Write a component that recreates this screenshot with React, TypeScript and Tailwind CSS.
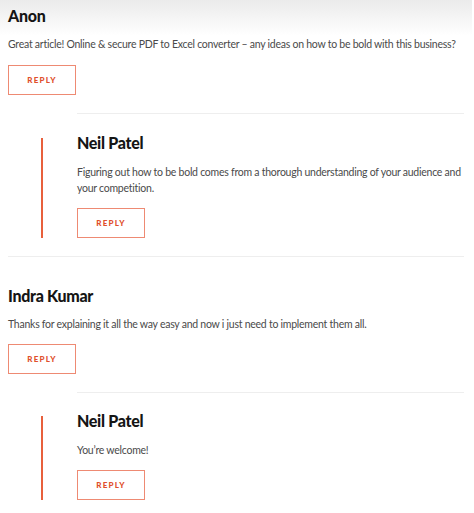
import React from "react";

function ReplyButton() {
  return (
    <button className="flex h-[30px] w-[68px] items-center justify-center border border-[#ee8a73] bg-white font-['Lato',sans-serif] text-[8px] font-black tracking-[1.2px] text-[#e0502c]">
      REPLY
    </button>
  );
}

function Heading({ children }: { children: React.ReactNode }) {
  return (
    <h3 className="h-[20px] font-['Lato',sans-serif] text-[16px] font-black leading-[20px] tracking-[-0.3px] text-[#151515]">
      {children}
    </h3>
  );
}

function Body({ children, mt }: { children: React.ReactNode; mt: string }) {
  return (
    <p className={`${mt} font-['Lato',sans-serif] text-[10.5px] leading-[16px] tracking-[-0.25px] text-[#4a4a4a]`}>
      {children}
    </p>
  );
}

export default function App() {
  return (
    <div className="h-[513px] w-[474px] overflow-hidden bg-white">
      <div className="w-[472px] bg-[linear-gradient(to_bottom,#ebebeb_0px,#ffffff_36px)] px-2 pt-[6px]">
        {/* Anon */}
        <Heading>Anon</Heading>
        <Body mt="mt-[10px]">
          Great article! Online &amp; secure PDF to Excel converter – any ideas on how to be bold with this business?
        </Body>
        <div className="mt-[13px]">
          <ReplyButton />
        </div>

        <div className="ml-[69px] mt-[18px] border-t border-[#eeeeee]" />
        <div className="flex pt-[19px]">
          <div className="ml-[33px] mt-[5px] w-[2px] bg-[#e8603c]" />
          <div className="ml-[34px] flex-1 pr-[2px]">
            <Heading>Neil Patel</Heading>
            <Body mt="mt-[11px]">
              Figuring out how to be bold comes from a thorough understanding of your audience and your competition.
            </Body>
            <div className="mt-[12px]">
              <ReplyButton />
            </div>
          </div>
        </div>

        <div className="mt-[18px] border-t border-[#eeeeee]" />

        {/* Indra */}
        <div className="pt-[29px]">
          <Heading>Indra Kumar</Heading>
          <Body mt="mt-[10px]">
            Thanks for explaining it all the way easy and now i just need to implement them all.
          </Body>
          <div className="mt-[12px]">
            <ReplyButton />
          </div>
        </div>

        <div className="ml-[69px] mt-[18px] border-t border-[#eeeeee]" />
        <div className="flex pt-[18px]">
          <div className="ml-[33px] mt-[5px] w-[2px] bg-[#e8603c]" />
          <div className="ml-[34px] flex-1">
            <Heading>Neil Patel</Heading>
            <Body mt="mt-[11px]">You’re welcome!</Body>
            <div className="mt-[12px]">
              <ReplyButton />
            </div>
          </div>
        </div>
      </div>
    </div>
  );
}
